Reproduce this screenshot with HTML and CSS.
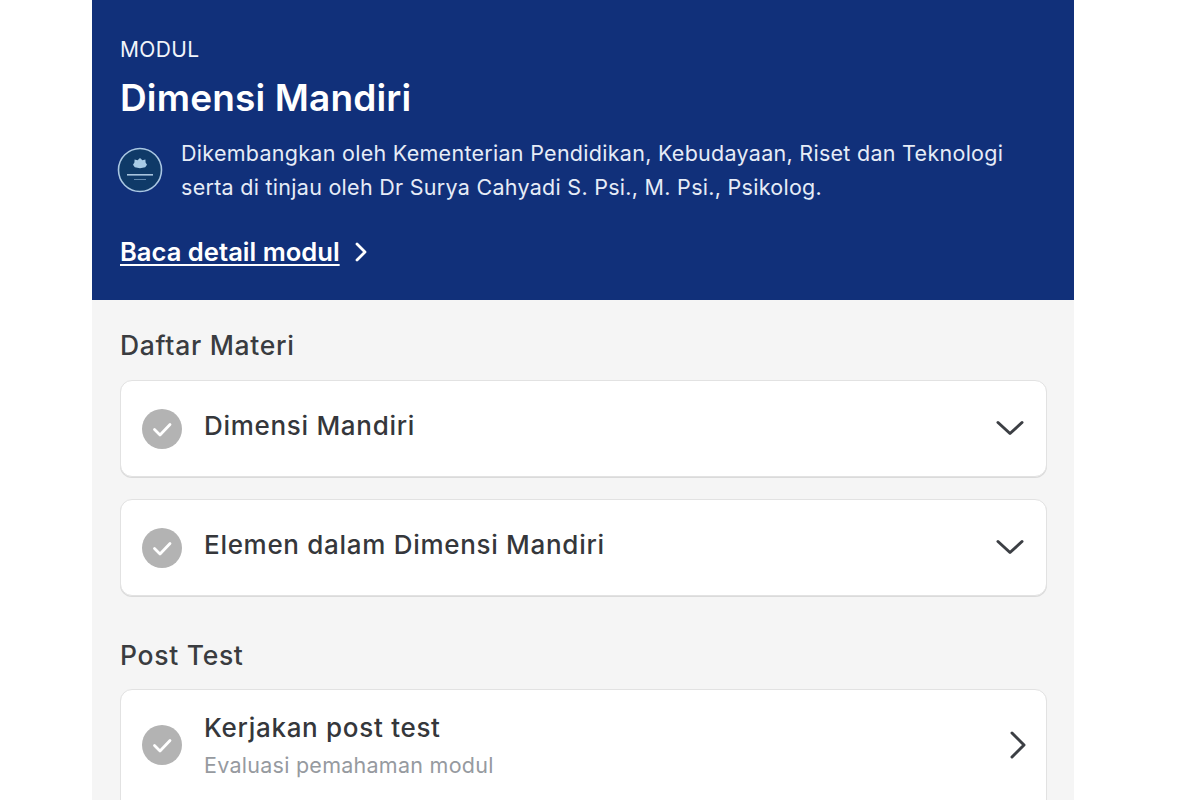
FILE: index.html
```html
<!DOCTYPE html>
<html lang="id">
<head>
<meta charset="utf-8">
<title>Dimensi Mandiri</title>
<link rel="stylesheet" href="styles.css">
</head>
<body>
<main class="panel">
  <header class="hero">
    <div class="eyebrow">MODUL</div>
    <h1 class="title">Dimensi Mandiri</h1>
    <div class="dev">
      <svg class="logo" viewBox="0 0 46 46" aria-hidden="true">
        <circle cx="23" cy="23" r="21.500" fill="#0f3a68" stroke="#a9c6e2" stroke-width="1.600"/>
        <path d="M23 11l2.400 2.200 3-.8.2 3.200 1.400 2.200-1.800 2.400-5.200 1-5.200-1-1.800-2.400 1.400-2.200.2-3.200 3 .8z" fill="#a8cbe6"/>
        <rect x="10" y="27" width="26" height="1.600" fill="#a8c4de"/>
        <rect x="17" y="32" width="12" height="1" fill="#5f86ad"/>
      </svg>
      <p class="dev-text">Dikembangkan oleh Kementerian Pendidikan, Kebudayaan, Riset dan Teknologi<br>serta di tinjau oleh Dr Surya Cahyadi S. Psi., M. Psi., Psikolog.</p>
    </div>
    <div class="detail">
      <a class="detail-link" href="#">Baca detail modul</a>
      <svg class="detail-chev" viewBox="0 0 14 22" aria-hidden="true"><path d="M3 3l8 8-8 8" fill="none" stroke="#fff" stroke-width="2.800" stroke-linecap="round" stroke-linejoin="round"/></svg>
    </div>
  </header>
  <section class="content">
    <h2 class="section-title">Daftar Materi</h2>
    <div class="list">
      <div class="card">
        <svg class="check" viewBox="0 0 40 40" aria-hidden="true"><circle cx="20" cy="20" r="20" fill="#b3b3b3"/><path d="M12.500 20.500l5.500 5.500 10-10.500" fill="none" stroke="#fff" stroke-width="2.800" stroke-linecap="round" stroke-linejoin="round"/></svg>
        <div class="card-name">Dimensi Mandiri</div>
        <svg class="chev-down" viewBox="0 0 28 16" aria-hidden="true"><path d="M2 2.500l12 11 12-11" fill="none" stroke="#3c3f44" stroke-width="3" stroke-linecap="round" stroke-linejoin="round"/></svg>
      </div>
      <div class="card">
        <svg class="check" viewBox="0 0 40 40" aria-hidden="true"><circle cx="20" cy="20" r="20" fill="#b3b3b3"/><path d="M12.500 20.500l5.500 5.500 10-10.500" fill="none" stroke="#fff" stroke-width="2.800" stroke-linecap="round" stroke-linejoin="round"/></svg>
        <div class="card-name">Elemen dalam Dimensi Mandiri</div>
        <svg class="chev-down" viewBox="0 0 28 16" aria-hidden="true"><path d="M2 2.500l12 11 12-11" fill="none" stroke="#3c3f44" stroke-width="3" stroke-linecap="round" stroke-linejoin="round"/></svg>
      </div>
    </div>
    <h2 class="section-title section-post">Post Test</h2>
    <div class="card card-test">
      <svg class="check" viewBox="0 0 40 40" aria-hidden="true"><circle cx="20" cy="20" r="20" fill="#b3b3b3"/><path d="M12.500 20.500l5.500 5.500 10-10.500" fill="none" stroke="#fff" stroke-width="2.800" stroke-linecap="round" stroke-linejoin="round"/></svg>
      <div class="card-body">
        <div class="card-name">Kerjakan post test</div>
        <div class="card-sub">Evaluasi pemahaman modul</div>
      </div>
      <svg class="chev-right" viewBox="0 0 18 30" aria-hidden="true"><path d="M3 3l12 12L3 27" fill="none" stroke="#3c3f44" stroke-width="3" stroke-linecap="round" stroke-linejoin="round"/></svg>
    </div>
  </section>
</main>
</body>
</html>
```

FILE: styles.css
```css
* { box-sizing: border-box; }
html, body { margin: 0; height: 800px; overflow: hidden; background: #fff; }
body { font-family: Inter, "Liberation Sans", sans-serif; }
.panel { width: 982px; margin-left: 92px; height: 800px; background: #f5f5f5; overflow: hidden; }
.hero { height: 300px; background: #11307a; color: #fff; padding: 38px 28px 0; }
.eyebrow { font-size: 21px; line-height: 24px; font-weight: 400; color: #f2f5fb; letter-spacing: 0.35px; }
.title { margin: 11px 0 0; font-size: 37px; line-height: 50px; font-weight: 600; letter-spacing: 0.15px; }
.dev { display: flex; align-items: center; gap: 18px; margin-top: 13px; }
.logo { width: 46px; height: 46px; flex: none; margin-left: -3px; }
.dev-text { margin: 0; font-size: 21.500px; line-height: 34px; color: #e6ecf7; letter-spacing: 0.28px; white-space: nowrap; }
.detail { display: flex; align-items: center; gap: 14px; margin-top: 32px; }
.detail-link { color: #fff; font-size: 25.600px; line-height: 32px; font-weight: 600; text-decoration: underline; text-underline-offset: 3px; text-decoration-thickness: 2px; }
.detail-chev { width: 14px; height: 22px; }
.content { padding: 27px 27px 0 28px; }
.section-title { margin: 0; font-size: 26.500px; line-height: 36px; font-weight: 500; color: #3a3c40; letter-spacing: 0.7px; }
.section-post { margin-top: 41px; }
.list { display: flex; flex-direction: column; gap: 22px; margin-top: 17px; }
.card { display: flex; align-items: center; background: #fff; border: 1px solid #e2e2e2; border-radius: 12px; padding: 0 22px 0 21px; height: 97px; box-shadow: 0 1px 0 #dadada; }
.check { width: 40px; height: 40px; flex: none; }
.card-name { flex: 1; margin-left: 22px; font-size: 26px; line-height: 34px; font-weight: 500; color: #35373b; margin-top: -5px; letter-spacing: 0.7px; }
.chev-down { width: 28px; height: 16px; flex: none; margin-top: -2px; }
.card-test { margin-top: 16px; height: 140px; padding-bottom: 29px; padding-right: 19px; }
.card-body { flex: 1; margin-top: 1px; }
.card-body .card-name { margin-top: 0; }
.card-sub { margin-left: 22px; margin-top: 5px; font-size: 21.500px; line-height: 30px; color: #969a9f; letter-spacing: 0.26px; }
.chev-right { width: 18px; height: 30px; flex: none; }
```
